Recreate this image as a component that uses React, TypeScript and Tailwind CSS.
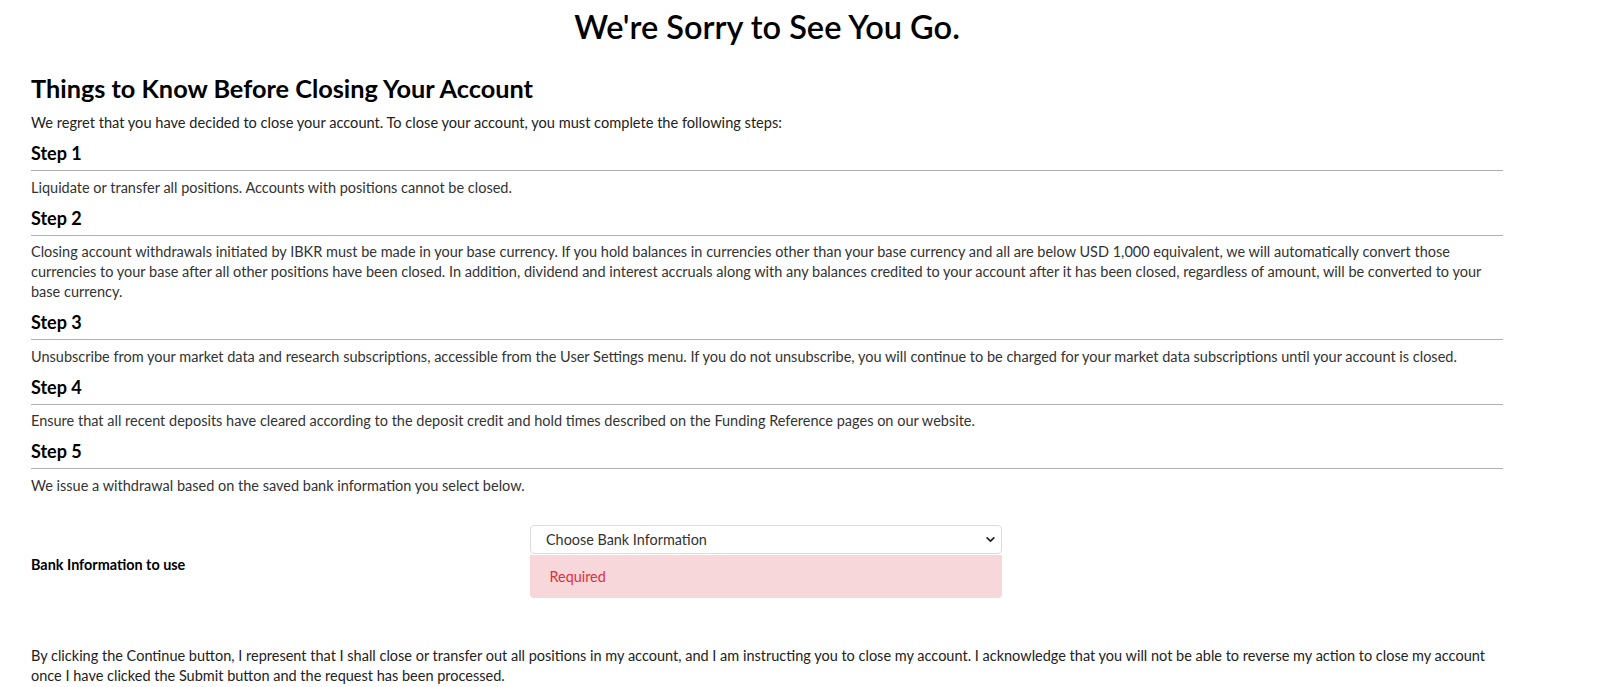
import React from 'react';

const steps: { title: string; body: React.ReactNode }[] = [
  {
    title: 'Step 1',
    body: 'Liquidate or transfer all positions. Accounts with positions cannot be closed.',
  },
  {
    title: 'Step 2',
    body: 'Closing account withdrawals initiated by IBKR must be made in your base currency. If you hold balances in currencies other than your base currency and all are below USD 1,000 equivalent, we will automatically convert those currencies to your base after all other positions have been closed. In addition, dividend and interest accruals along with any balances credited to your account after it has been closed, regardless of amount, will be converted to your base currency.',
  },
  {
    title: 'Step 3',
    body: 'Unsubscribe from your market data and research subscriptions, accessible from the User Settings menu. If you do not unsubscribe, you will continue to be charged for your market data subscriptions until your account is closed.',
  },
  {
    title: 'Step 4',
    body: 'Ensure that all recent deposits have cleared according to the deposit credit and hold times described on the Funding Reference pages on our website.',
  },
  {
    title: 'Step 5',
    body: 'We issue a withdrawal based on the saved bank information you select below.',
  },
];

const App: React.FC = () => {
  return (
    <div className="min-h-screen bg-white font-['Lato',sans-serif] text-[#222]">
      <div className="ml-[31px] w-[1472px]">
        {/* Page title */}
        <h1 className="pt-[7px] text-center text-[32.5px] font-semibold leading-[40px] text-black">
          We're Sorry to See You Go.
        </h1>

        <h2 className="mt-[25px] text-[25.3px] font-bold leading-[32px] text-black">
          Things to Know Before Closing Your Account
        </h2>
        <p className="mt-[9px] text-[14.6px] leading-[20px] text-[#222]">
          We regret that you have decided to close your account. To close your account, you must complete the following steps:
        </p>

        {/* Steps */}
        {steps.map((step) => (
          <div key={step.title} className="mt-[8px]">
            <h3 className="border-b border-[#b0b0b0] pb-[5px] text-[18px] font-bold leading-[24px] text-black">
              {step.title}
            </h3>
            <p className="mt-[6.5px] text-[14.5px] leading-[20px] text-[#333]">{step.body}</p>
          </div>
        ))}

        {/* Bank selection */}
        <div className="mt-[29.5px] flex items-start">
          <label className="w-[499px] pt-[30px] text-[14.4px] font-bold leading-[20px] text-black">
            Bank Information to use
          </label>
          <div className="w-[472px]">
            <div className="relative">
              <select
                defaultValue=""
                className="h-[29px] w-full appearance-none rounded-[4px] border border-[#dcdcdc] bg-white pl-[15px] pr-8 text-[14.4px] text-[#333] outline-none"
              >
                <option value="">Choose Bank Information</option>
              </select>
              <svg
                className="pointer-events-none absolute right-[7px] top-[10px] h-[9px] w-[9px]"
                viewBox="0 0 16 16"
                fill="none"
                stroke="#222"
                strokeWidth="3"
                strokeLinecap="round"
                strokeLinejoin="round"
              >
                <path d="M2 5l6 6 6-6" />
              </svg>
            </div>
            <div className="mt-px rounded-b-[4px] bg-[#f8d7da] px-[19.5px] py-[11.5px] text-[14.4px] leading-[20px] text-[#e0303f]">
              Required
            </div>
          </div>
        </div>

        <p className="mt-[47.5px] text-[14.5px] leading-[20.5px] text-[#222]">
          By clicking the Continue button, I represent that I shall close or transfer out all positions in my account, and I am instructing you to close my account. I acknowledge that you will not be able to reverse my action to close my account once I have clicked the Submit button and the request has been processed.
        </p>
      </div>
    </div>
  );
};

export default App;
